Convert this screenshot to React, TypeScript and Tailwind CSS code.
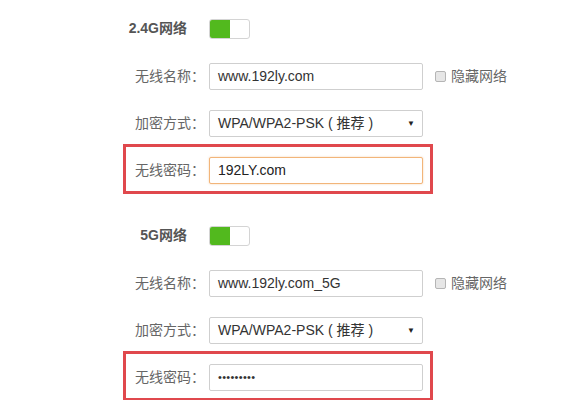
const font = { fontFamily: '"Liberation Sans", "Noto Sans CJK SC", sans-serif' };

function Toggle() {
  return (
    <div className="flex h-[20px] w-[41px] overflow-hidden rounded-[3px] border border-[#d4d4d4] bg-white">
      <div className="h-full w-[20px] bg-[#52b91e]" />
    </div>
  );
}

function Label({ children }: { children: string }) {
  return <div className="w-[79px] text-right text-[14px] text-[#666]">{children}</div>;
}

function Field({ children, focus, dark }: { children: React.ReactNode; focus?: boolean; dark?: boolean }) {
  return (
    <div
      className={
        "ml-1 flex h-[27px] w-[214px] items-center rounded-[2px] border bg-white px-[8px] text-[14px] " +
        (focus ? "border-[#f2b57a] shadow-[0_0_2px_rgba(240,160,80,0.5)] " : "border-[#cfcfcf] ") +
        (dark ? "text-[#222]" : "text-[#333]")
      }
    >
      {children}
    </div>
  );
}

function Hide() {
  return (
    <div className="ml-3 flex items-center gap-[5px] text-[14px] text-[#666]">
      <span className="block h-[11px] w-[11px] rounded-[2px] border border-[#b5b5b5] bg-[#e6e6e6]" />
      <span>隐藏网络</span>
    </div>
  );
}

function Select() {
  return (
    <div className="ml-1 flex h-[27px] w-[214px] items-center justify-between rounded-[2px] border border-[#cfcfcf] bg-white pl-[8px] pr-[7px] text-[14px] text-[#333]">
      <span>WPA/WPA2-PSK ( 推荐 )</span>
      <span className="text-[8px] text-[#222]">▼</span>
    </div>
  );
}

function Section({ title, ssid, pwd, first }: { title: string; ssid: string; pwd: React.ReactNode; first?: boolean }) {
  return (
    <div className={first ? "pt-[18px]" : "pt-[31px]"}>
      <div className="flex items-center">
        <div className="w-[79px] pr-[18px] text-right text-[14px] font-bold text-[#555]">{title}</div>
        <div className="ml-1">
          <Toggle />
        </div>
      </div>
      <div className="mt-[24px] flex items-center">
        <Label>无线名称：</Label>
        <Field>{ssid}</Field>
        <Hide />
      </div>
      <div className="mt-[20px] flex items-center">
        <Label>加密方式：</Label>
        <Select />
      </div>
      <div className="-ml-[3px] mt-[7px] w-[310px] border-[3px] border-[#e0484d] pb-[7px] pt-[10px]">
        <div className="flex items-center">
          <Label>无线密码：</Label>
          {pwd}
        </div>
      </div>
    </div>
  );
}

export default function App() {
  return (
    <div className="h-[400px] w-[563px] overflow-hidden bg-white pl-[126px]" style={font}>
      <Section
        first
        title="2.4G网络"
        ssid="www.192ly.com"
        pwd={
          <Field focus dark>
            192LY.com
          </Field>
        }
      />
      <Section
        title="5G网络"
        ssid="www.192ly.com_5G"
        pwd={
          <Field>
            <span className="text-[11px] tracking-[0.3px] text-[#333]">•••••••••</span>
          </Field>
        }
      />
    </div>
  );
}
